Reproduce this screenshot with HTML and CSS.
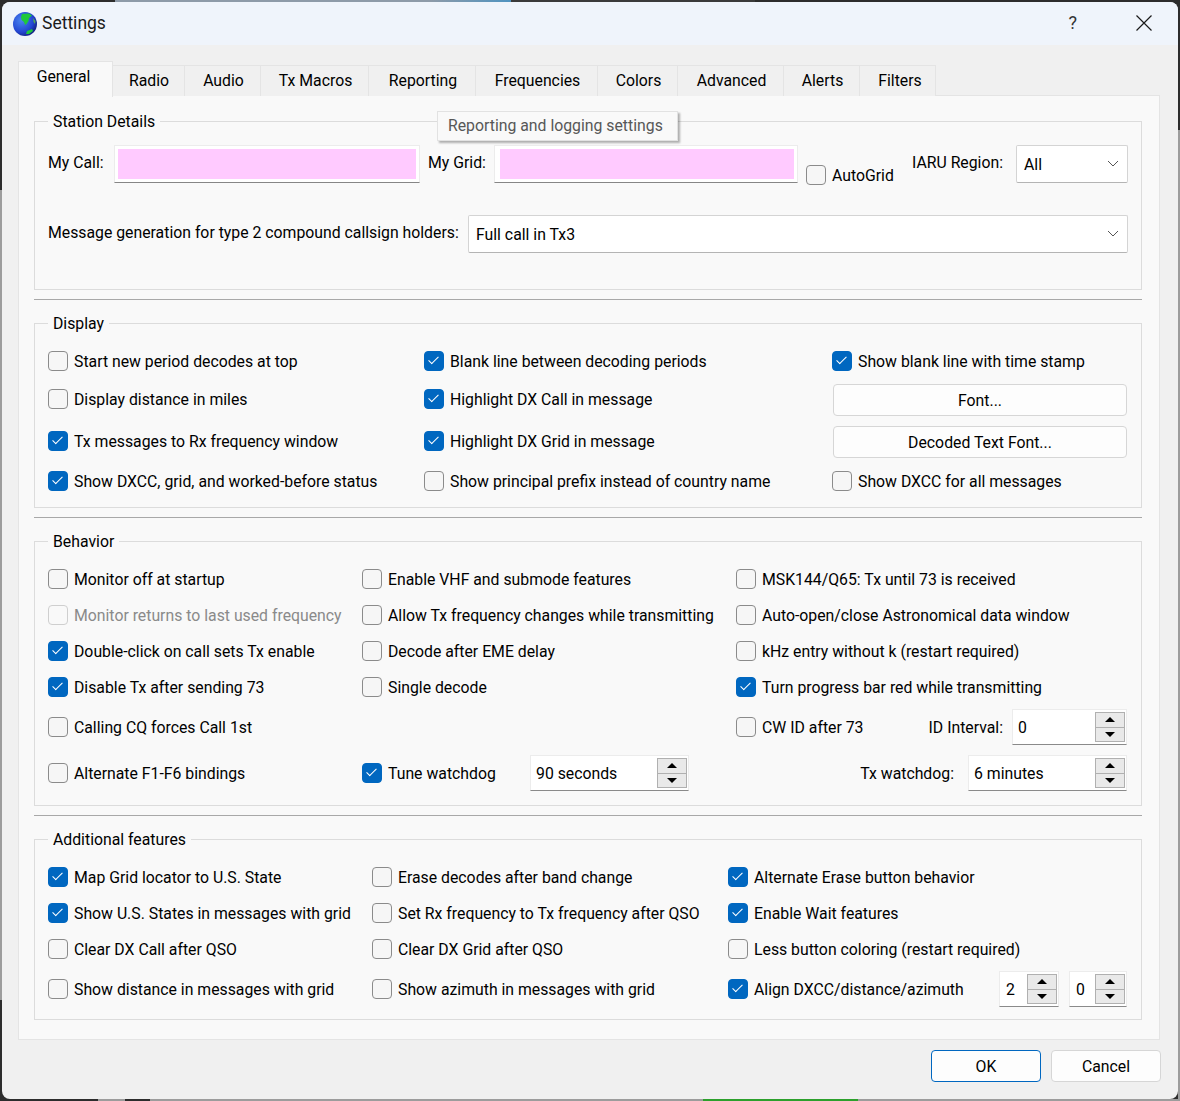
FILE: index.html

```html
<!DOCTYPE html>
<html lang="en">
<head>
    <meta charset="UTF-8">
    <title>Settings</title>
    <link rel="stylesheet" href="styles.css">
</head>
<body>
    <div class="window">
        <div class="titlebar">
            <svg class="globe" width="24" height="24" viewBox="0 0 24 24">
                <defs>
                    <radialGradient id="sea" cx="0.35" cy="0.35" r="0.75">
                        <stop offset="0" stop-color="#4a84f0"/>
                        <stop offset="0.65" stop-color="#2346d2"/>
                        <stop offset="1" stop-color="#101a70"/>
                    </radialGradient>
                </defs>
                <circle cx="12" cy="12" r="12" fill="url(#sea)"/>
                <path d="M9 2 L16 1.5 L19 3.5 L16 6 L15.5 9 L13.5 12 L12 13 L11 10 L8.5 8 L8 5 Z" fill="#1fc83c"/>
                <path d="M14 19 L19 17 L20 19 L16 22 L13 22 Z" fill="#1fc83c"/>
                <path d="M20 6 L22.5 9 L22 12 L20.5 10 Z" fill="#4fa45a"/>
            </svg>
            <span class="title">Settings</span>
            <span class="help">?</span>
            <svg class="close" width="16" height="16" viewBox="0 0 16 16">
                <path d="M0.5 0.5 L15.5 15.5 M15.5 0.5 L0.5 15.5" stroke="#1a1a1a" stroke-width="1.2" fill="none"/>
            </svg>
        </div>

        <div class="content">
            <div class="tabs">
                <div class="tab active">General</div>
                <div class="tab">Radio</div>
                <div class="tab">Audio</div>
                <div class="tab">Tx Macros</div>
                <div class="tab">Reporting</div>
                <div class="tab">Frequencies</div>
                <div class="tab">Colors</div>
                <div class="tab">Advanced</div>
                <div class="tab">Alerts</div>
                <div class="tab">Filters</div>
            </div>

            <div class="pane">
                <div class="group station">
                    <div class="group-title">Station Details</div>
                    <div class="station-row">
                        <span class="field-label">My Call:</span>
                        <div class="call-input call"><div class="pink"></div></div>
                        <span class="field-label grid-label">My Grid:</span>
                        <div class="call-input grid"><div class="pink"></div></div>
                        <label class="check autogrid"><input type="checkbox"> AutoGrid</label>
                        <span class="field-label iaru-label">IARU Region:</span>
                        <div class="combo iaru">All
                            <svg class="chevron" width="12" height="7" viewBox="0 0 12 7"><path d="M1 1 L6 6 L11 1" stroke="#555" fill="none"/></svg>
                        </div>
                    </div>
                    <div class="station-row second">
                        <span class="field-label msg-label">Message generation for type 2 compound callsign holders:</span>
                        <div class="combo wide">Full call in Tx3
                            <svg class="chevron" width="12" height="7" viewBox="0 0 12 7"><path d="M1 1 L6 6 L11 1" stroke="#555" fill="none"/></svg>
                        </div>
                    </div>
                </div>

                <div class="divider"></div>

                <div class="group">
                    <div class="group-title">Display</div>
                    <div class="rows display-rows">
                        <label class="check"><input type="checkbox"> Start new period decodes at top</label>
                        <label class="check"><input type="checkbox" checked> Blank line between decoding periods</label>
                        <label class="check"><input type="checkbox" checked> Show blank line with time stamp</label>

                        <label class="check"><input type="checkbox"> Display distance in miles</label>
                        <label class="check"><input type="checkbox" checked> Highlight DX Call in message</label>
                        <button class="btn font-btn">Font...</button>

                        <label class="check"><input type="checkbox" checked> Tx messages to Rx frequency window</label>
                        <label class="check"><input type="checkbox" checked> Highlight DX Grid in message</label>
                        <button class="btn font-btn">Decoded Text Font...</button>

                        <label class="check"><input type="checkbox" checked> Show DXCC, grid, and worked-before status</label>
                        <label class="check"><input type="checkbox"> Show principal prefix instead of country name</label>
                        <label class="check"><input type="checkbox"> Show DXCC for all messages</label>
                    </div>
                </div>

                <div class="divider"></div>

                <div class="group">
                    <div class="group-title">Behavior</div>
                    <div class="rows behavior-rows">
                        <label class="check"><input type="checkbox"> Monitor off at startup</label>
                        <label class="check"><input type="checkbox"> Enable VHF and submode features</label>
                        <label class="check"><input type="checkbox"> MSK144/Q65: Tx until 73 is received</label>

                        <label class="check disabled"><input type="checkbox" disabled> Monitor returns to last used frequency</label>
                        <label class="check"><input type="checkbox"> Allow Tx frequency changes while transmitting</label>
                        <label class="check"><input type="checkbox"> Auto-open/close Astronomical data window</label>

                        <label class="check"><input type="checkbox" checked> Double-click on call sets Tx enable</label>
                        <label class="check"><input type="checkbox"> Decode after EME delay</label>
                        <label class="check"><input type="checkbox"> kHz entry without k (restart required)</label>

                        <label class="check"><input type="checkbox" checked> Disable Tx after sending 73</label>
                        <label class="check"><input type="checkbox"> Single decode</label>
                        <label class="check"><input type="checkbox" checked> Turn progress bar red while transmitting</label>

                        <label class="check"><input type="checkbox"> Calling CQ forces Call 1st</label>
                        <div></div>
                        <div class="cell-split">
                            <label class="check"><input type="checkbox"> CW ID after 73</label>
                            <span class="spin-label id-label">ID Interval:</span>
                            <div class="spin long">0
                                <div class="spin-btns"><span class="up"></span><span class="down"></span></div>
                            </div>
                        </div>

                        <label class="check"><input type="checkbox"> Alternate F1-F6 bindings</label>
                        <div class="cell-tune">
                            <label class="check"><input type="checkbox" checked> Tune watchdog</label>
                            <div class="spin long">90 seconds
                                <div class="spin-btns"><span class="up"></span><span class="down"></span></div>
                            </div>
                        </div>
                        <div class="cell-split end">
                            <span class="spin-label tx-label">Tx watchdog:</span>
                            <div class="spin long">6 minutes
                                <div class="spin-btns"><span class="up"></span><span class="down"></span></div>
                            </div>
                        </div>
                    </div>
                </div>

                <div class="divider"></div>

                <div class="group">
                    <div class="group-title">Additional features</div>
                    <div class="rows extra-rows">
                        <label class="check"><input type="checkbox" checked> Map Grid locator to U.S. State</label>
                        <label class="check"><input type="checkbox"> Erase decodes after band change</label>
                        <label class="check"><input type="checkbox" checked> Alternate Erase button behavior</label>

                        <label class="check"><input type="checkbox" checked> Show U.S. States in messages with grid</label>
                        <label class="check"><input type="checkbox"> Set Rx frequency to Tx frequency after QSO</label>
                        <label class="check"><input type="checkbox" checked> Enable Wait features</label>

                        <label class="check"><input type="checkbox"> Clear DX Call after QSO</label>
                        <label class="check"><input type="checkbox"> Clear DX Grid after QSO</label>
                        <label class="check"><input type="checkbox"> Less button coloring (restart required)</label>

                        <label class="check"><input type="checkbox"> Show distance in messages with grid</label>
                        <label class="check"><input type="checkbox"> Show azimuth in messages with grid</label>
                        <div class="cell-split">
                            <label class="check"><input type="checkbox" checked> Align DXCC/distance/azimuth</label>
                            <div class="spin-pair">
                                <div class="spin short">2
                                    <div class="spin-btns"><span class="up"></span><span class="down"></span></div>
                                </div>
                                <div class="spin short">0
                                    <div class="spin-btns"><span class="up"></span><span class="down"></span></div>
                                </div>
                            </div>
                        </div>
                    </div>
                </div>
            </div>

            <div class="actions">
                <button class="btn action primary">OK</button>
                <button class="btn action">Cancel</button>
            </div>
        </div>

        <div class="tooltip">Reporting and logging settings</div>
    </div>
</body>
</html>
```

FILE: styles.css

```css
html, body {
    margin: 0;
    height: 1101px;
    overflow: hidden;
}

/* slivers of the desktop showing around the dialog */
body {
    background:
        linear-gradient(to right, #2c2c2c 115px, #8d9aa8 115px, #8d9aa8 430px, #4f93c0 511px, #3a3a3a 511px, #3a3a3a 755px, #2c2c2c 755px) top / 100% 2px no-repeat,
        linear-gradient(to right, #2c2c2c 98px, #9c9c9c 98px, #9c9c9c 125px, #2c2c2c 125px, #2c2c2c 150px, #9c9c9c 150px, #9c9c9c 703px, #2ca02c 703px, #2ca02c 858px, #9c9c9c 858px) bottom / 100% 2px no-repeat,
        linear-gradient(#2c2c2c 130px, #9c9c9c 130px) right / 2px 100% no-repeat,
        linear-gradient(#2c2c2c 190px, #9c9c9c 190px, #9c9c9c 1000px, #2c2c2c 1000px) left / 2px 100% no-repeat,
        #2c2c2c;
    font-family: Roboto, sans-serif;
    font-size: 15.8px;
    color: #000;
}

.window {
    position: relative;
    width: 1176px;
    height: 1097px;
    margin: 2px;
    border-radius: 8px;
    background: #f0f0f0;
    overflow: hidden;
}

.titlebar {
    display: flex;
    align-items: center;
    height: 43px;
    padding-left: 11px;
    background: #eff4fb;
}

.title {
    margin: -2px 0 0 5px;
    font-size: 17.5px;
    color: #1a1a1a;
}

.help {
    margin: -2px 0 0 auto;
    font-size: 18px;
    color: #333;
}

.close {
    margin: -2px 26px 0 59px;
}

.content {
    padding: 15px 18px 0 16px;
}

/* tabs */
.tabs {
    display: flex;
    align-items: flex-end;
    height: 36px;
}

.tab {
    box-sizing: border-box;
    width: 76px;
    height: 31px;
    padding-left: 2px;
    line-height: 29px;
    text-align: center;
    background: #f0f0f0;
    border: 1px solid #e4e4e4;
    border-left: 0;
    border-bottom: 0;
}

.tab.active {
    width: 95px;
    height: 36px;
    margin-bottom: -1px;
    padding: 0 4px 0 0;
    line-height: 30px;
    background: #f9f9f9;
    border-left: 1px solid #e4e4e4;
    position: relative;
    z-index: 1;
}

.tab:nth-child(2) { width: 72px; padding-left: 1px; }
.tab:nth-child(4) { width: 108px; }
.tab:nth-child(5) { width: 107px; }
.tab:nth-child(6) { width: 122px; }
.tab:nth-child(7) { width: 80px; }
.tab:nth-child(8) { width: 106px; }
.tab:nth-child(10) { padding-left: 5px; }

.pane {
    box-sizing: border-box;
    height: 945px;
    margin-top: -1px;
    padding: 25px 17px 0 15px;
    background: #f9f9f9;
    border: 1px solid #e4e4e4;
}

/* group boxes */
.group {
    padding: 0 13px 8px;
    border: 1px solid #dcdcdc;
}

.group-title {
    display: table;
    height: 24px;
    margin: -12px 0 0;
    padding: 0 5px;
    line-height: 24px;
    background: #f9f9f9;
}

.divider {
    height: 1px;
    margin: 9px 0 23px;
    background: #a8a8a8;
}

.rows {
    display: grid;
    align-items: center;
    margin-top: 7px;
}

.display-rows {
    grid-template-columns: 376px 408px 296px;
    grid-template-rows: 36px 40px 44px 36px;
}

.behavior-rows {
    grid-template-columns: 314px 374px 392px;
    grid-template-rows: 36px 36px 36px 36px 44px 48px;
}

.extra-rows {
    grid-template-columns: 324px 356px 400px;
    grid-template-rows: 36px 36px 36px 44px;
}

/* checkboxes */
.check {
    display: flex;
    align-items: center;
    white-space: nowrap;
}

.check input {
    appearance: none;
    position: relative;
    box-sizing: border-box;
    flex: none;
    width: 20px;
    height: 20px;
    margin: 0 6px 0 0;
    background: #f6f6f6;
    border: 1px solid #8b8b8b;
    border-radius: 4px;
}

.check input:checked {
    background: #0067c0;
    border-color: #0067c0;
}

.check input:checked::after {
    content: "";
    position: absolute;
    left: 6px;
    top: 2px;
    width: 4px;
    height: 9px;
    border-right: 1px solid #fff;
    border-bottom: 1px solid #fff;
    transform: rotate(45deg);
}

.check.disabled {
    color: #8a8a8a;
}

.check.disabled input {
    background: #f9f9f9;
    border-color: #cfcfcf;
}

/* station details */
.station {
    padding-bottom: 36px;
}

.station-row {
    display: flex;
    align-items: flex-start;
    height: 38px;
    margin-top: 11px;
}

.station-row.second {
    margin-top: 32px;
    align-items: center;
}

.field-label {
    flex: none;
    width: 66px;
    white-space: nowrap;
    line-height: 36px;
}

.call-input {
    flex: none;
    box-sizing: border-box;
    height: 38px;
    padding: 3px;
    background: #fff;
    border: 1px solid #ececec;
    border-bottom: 1px solid #868686;
}

.call-input.call {
    width: 306px;
}

.call-input.grid {
    width: 304px;
    padding-left: 5px;
}

.pink {
    height: 100%;
    background: #ffcaff;
}

.grid-label {
    margin-left: 8px;
}

.autogrid {
    height: 20px;
    margin: 20px 0 0 8px;
}

.iaru-label {
    width: 104px;
    margin-left: auto;
}

.combo {
    position: relative;
    box-sizing: border-box;
    height: 38px;
    padding-left: 7px;
    line-height: 38px;
    background: #fff;
    border: 1px solid #d4d4d4;
    border-bottom-color: #b4b4b4;
    border-radius: 2px;
}

.combo.iaru {
    flex: none;
    width: 112px;
}

.combo.wide {
    flex: 1;
}

.msg-label {
    width: 420px;
    margin-top: -2px;
}

.chevron {
    position: absolute;
    right: 8px;
    top: 14px;
}

/* buttons */
.btn {
    box-sizing: border-box;
    height: 32px;
    padding: 0;
    font-family: inherit;
    font-size: 15.8px;
    color: #000;
    background: #fdfdfd;
    border: 1px solid #d6d6d6;
    border-radius: 4px;
}

.font-btn {
    width: 294px;
    margin: 2px 0 0 1px;
}

/* spin boxes */
.spin {
    position: relative;
    box-sizing: border-box;
    height: 36px;
    padding-left: 5px;
    line-height: 36px;
    background: #fff;
    border: 1px solid #ececec;
    border-bottom: 1px solid #8a8a8a;
}

.spin.long {
    flex: none;
    width: 115px;
    margin-right: 1px;
}

.spin.short {
    width: 60px;
    padding-left: 6px;
}

.spin.short + .spin.short {
    width: 58px;
}

.cell-tune .spin.long,
.cell-split.end .spin.long {
    width: 159px;
}

.spin-btns {
    position: absolute;
    right: 1px;
    top: 2px;
    display: flex;
    flex-direction: column;
    box-sizing: border-box;
    width: 30px;
    height: 30px;
    border: 1px solid #b0b0b0;
    background: #e9e9e9;
}

.spin-btns span {
    flex: 1;
    display: flex;
    align-items: center;
    justify-content: center;
}

.spin-btns .up {
    border-bottom: 1px solid #b0b0b0;
}

.spin-btns .up::before {
    content: "";
    border-left: 5px solid transparent;
    border-right: 5px solid transparent;
    border-bottom: 5px solid #000;
}

.spin-btns .down::before {
    content: "";
    border-left: 5px solid transparent;
    border-right: 5px solid transparent;
    border-top: 5px solid #000;
}

.cell-split {
    display: flex;
    align-items: center;
}

.cell-split.end {
    justify-content: flex-end;
}

.cell-tune {
    display: flex;
    align-items: center;
    justify-content: space-between;
    width: 328px;
}

.spin-label {
    white-space: nowrap;
}

.id-label {
    margin: 0 9px 0 auto;
}

.tx-label {
    margin-right: 14px;
}

.spin-pair {
    display: flex;
    gap: 10px;
    margin: 0 1px 0 auto;
}

/* footer */
.actions {
    display: flex;
    justify-content: flex-end;
    gap: 10px;
    margin: 10px -1px 0 0;
}

.action {
    width: 110px;
}

.action.primary {
    border-color: #0067c0;
}

.tooltip {
    position: absolute;
    left: 435px;
    top: 109px;
    box-sizing: border-box;
    width: 241px;
    height: 30px;
    padding-left: 10px;
    line-height: 28px;
    color: #575757;
    background: #f9f9f9;
    border: 1px solid #e2e2e2;
    box-shadow: 2px 2px 2px rgba(0, 0, 0, 0.3);
}
```
